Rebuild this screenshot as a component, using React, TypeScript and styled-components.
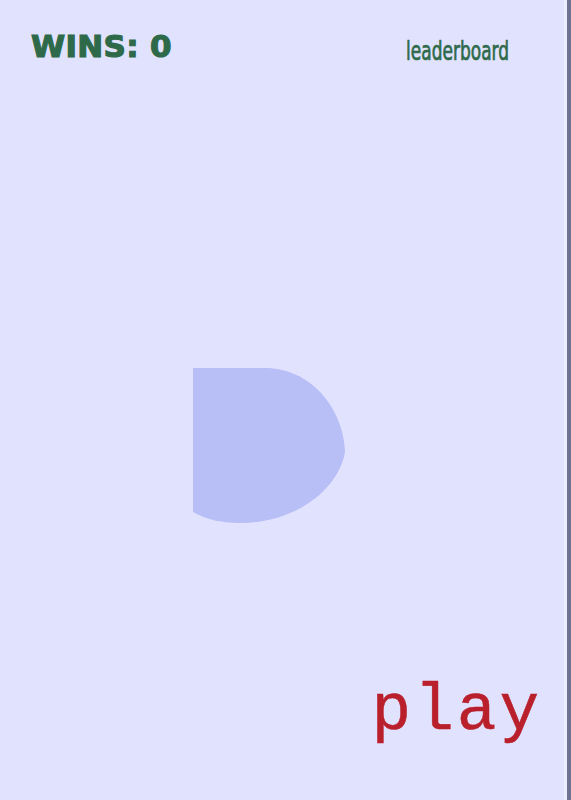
import styled, { createGlobalStyle } from "styled-components";

const GlobalStyle = createGlobalStyle`
  html, body {
    margin: 0;
    padding: 0;
    background: #e1e3fe;
  }
`;

const Page = styled.div`
  box-sizing: border-box;
  height: 100vh;
  display: flex;
  flex-direction: column;
  background: #e1e3fe;
  border-right: 4px solid #6f7290;
  box-shadow: inset -3px 0 0 #eceefe;
`;

const Header = styled.header`
  display: flex;
  justify-content: space-between;
  align-items: center;
  padding: 24px 58px 0 31px;
  height: 44px;
`;

const Wins = styled.h1`
  margin: 0;
  font-family: "DejaVu Sans", sans-serif;
  font-weight: 900;
  font-size: 31px;
  letter-spacing: 0.3px;
  color: #2e6a4a;
  -webkit-text-stroke: 1.2px #2e6a4a;
`;

const BoardLink = styled.a`
  display: inline-block;
  font-family: "DejaVu Sans Condensed", "DejaVu Sans", sans-serif;
  font-size: 27px;
  color: #2e6a4a;
  text-decoration: none;
  -webkit-text-stroke: 0.7px #2e6a4a;
  transform: scaleX(0.7);
  transform-origin: right center;
  margin-top: 8px;
`;

const Stage = styled.main`
  flex: 1;
  display: flex;
  align-items: center;
  justify-content: center;
  padding-top: 145px;
`;

const Blob = styled.svg`
  display: block;
  width: 181px;
  height: 156px;
`;

const Footer = styled.footer`
  display: flex;
  justify-content: flex-end;
  padding: 0 25px 55px 0;
`;

const PlayButton = styled.button`
  background: none;
  border: none;
  padding: 0;
  font-family: "Courier New", "Liberation Mono", monospace;
  font-size: 66px;
  line-height: 1;
  letter-spacing: 3px;
  color: #b9202c;
  -webkit-text-stroke: 0.5px #b9202c;
  cursor: pointer;
`;

export default () => {
  const wins = 0;

  return (
    <>
      <GlobalStyle />
      <Page>
        {/* 상단: 승리 횟수 / 리더보드 */}
        <Header>
          <Wins>WINS: {wins}</Wins>
          <BoardLink href="#">leaderboard</BoardLink>
        </Header>
        {/* 가운데 도형 */}
        <Stage>
          <Blob viewBox="0 0 181 156">
            <path
              d="M0 0 L72 0 C116 0 150 38 152 84 C146 120 104 155 47 155 C28 155 12 151 0 144 Z"
              fill="#b8bef6"
            />
          </Blob>
        </Stage>
        <Footer>
          <PlayButton>play</PlayButton>
        </Footer>
      </Page>
    </>
  );
};
